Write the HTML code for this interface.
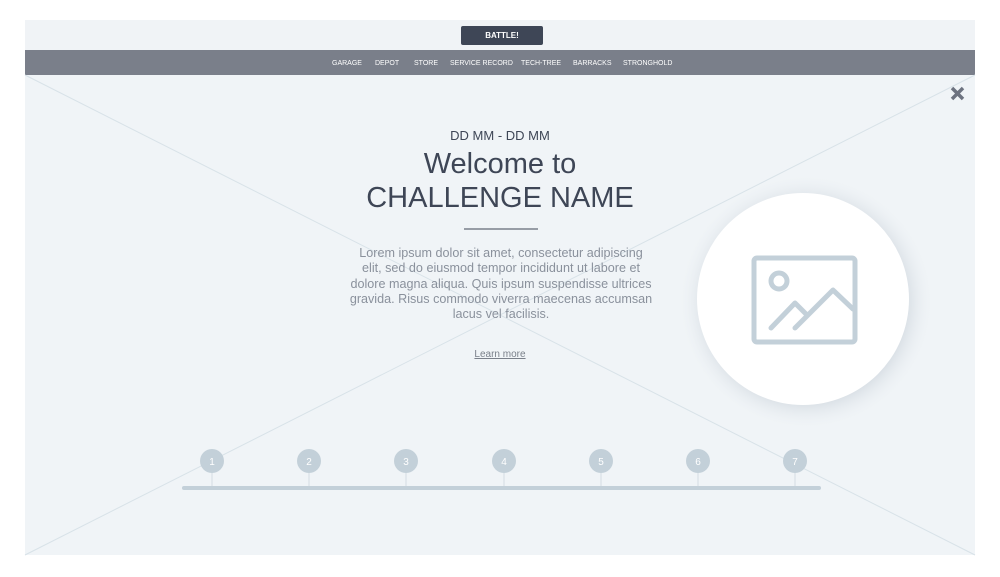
<!DOCTYPE html>
<html><head><style>
*{margin:0;padding:0;box-sizing:border-box}
body{width:1000px;height:577px;background:#fff;position:relative;font-family:"Liberation Sans",sans-serif;overflow:hidden}
.hdr{position:absolute;left:25px;top:20px;width:950px;height:30px;background:#f0f3f6}
.btn{position:absolute;left:461px;top:26px;width:82px;height:19px;background:#3e4656;border-radius:2px;color:#fff;font-size:8px;font-weight:bold;text-align:center;line-height:19px}
.nav{position:absolute;left:25px;top:50px;width:950px;height:25px;background:#7a7f8a;color:#fff;font-size:7px;line-height:27px}
.nav span{position:absolute;top:0;white-space:nowrap}
.main{position:absolute;left:25px;top:75px;width:950px;height:480px;background:#f0f4f7}
.t{position:absolute;left:0;width:1000px;text-align:center;color:#3e4656}
</style></head><body>
<div class="hdr"></div>
<div class="btn">BATTLE!</div>
<div class="nav">
<span style="left:307px">GARAGE</span><span style="left:350px">DEPOT</span><span style="left:389px">STORE</span><span style="left:425px">SERVICE RECORD</span><span style="left:496px">TECH-TREE</span><span style="left:548px">BARRACKS</span><span style="left:598px">STRONGHOLD</span>
</div>
<div class="main"></div>
<svg style="position:absolute;left:0;top:0" width="1000" height="577">
<line x1="25" y1="75" x2="975" y2="555" stroke="#d8e2e8" stroke-width="1"/>
<line x1="975" y1="75" x2="25" y2="555" stroke="#d8e2e8" stroke-width="1"/>
<defs><radialGradient id="g"><stop offset="0.8" stop-color="#c8d0d8" stop-opacity="0.5"/><stop offset="1" stop-color="#f0f4f7" stop-opacity="0"/></radialGradient></defs>
<circle cx="806" cy="302" r="128" fill="url(#g)"/>
<circle cx="803" cy="299" r="106" fill="#fff"/>
<rect x="754" y="258" width="101" height="84" rx="3" fill="none" stroke="#c3d0d9" stroke-width="5"/>
<circle cx="779" cy="281" r="8" fill="none" stroke="#c3d0d9" stroke-width="5"/>
<polyline points="771,328 795,303 807,315" fill="none" stroke="#c3d0d9" stroke-width="5" stroke-linecap="round" stroke-linejoin="round"/>
<polyline points="795,328 833,290 853,309" fill="none" stroke="#c3d0d9" stroke-width="5" stroke-linecap="round" stroke-linejoin="round"/>
<path d="M952 88 L963 99 M963 88 L952 99" stroke="#6d7380" stroke-width="3.5"/>
<rect x="182" y="486" width="639" height="4" rx="2" fill="#c3d0d9"/>
<g fill="#c3d0d9" stroke="#d3dde3">
<line x1="212" y1="461" x2="212" y2="486"/><line x1="309" y1="461" x2="309" y2="486"/><line x1="406" y1="461" x2="406" y2="486"/><line x1="504" y1="461" x2="504" y2="486"/><line x1="601" y1="461" x2="601" y2="486"/><line x1="698" y1="461" x2="698" y2="486"/><line x1="795" y1="461" x2="795" y2="486"/>
</g>
<g fill="#c3d0d9">
<circle cx="212" cy="461" r="12"/><circle cx="309" cy="461" r="12"/><circle cx="406" cy="461" r="12"/><circle cx="504" cy="461" r="12"/><circle cx="601" cy="461" r="12"/><circle cx="698" cy="461" r="12"/><circle cx="795" cy="461" r="12"/>
</g>
<g fill="#fff" font-family="Liberation Sans" font-size="10" text-anchor="middle">
<text x="212" y="465">1</text><text x="309" y="465">2</text><text x="406" y="465">3</text><text x="504" y="465">4</text><text x="601" y="465">5</text><text x="698" y="465">6</text><text x="795" y="465">7</text>
</g>
<line x1="464" y1="229" x2="538" y2="229" stroke="#3e4656" stroke-width="1"/>
</svg>
<div class="t" style="top:128px;font-size:13px">DD MM - DD MM</div>
<div class="t" style="top:147px;font-size:29px;line-height:34px">Welcome to<br>CHALLENGE NAME</div>
<div class="t" style="top:246px;left:349px;width:304px;font-size:12.6px;line-height:15.3px;color:#8a919c">Lorem ipsum dolor sit amet, consectetur adipiscing elit, sed do eiusmod tempor incididunt ut labore et dolore magna aliqua. Quis ipsum suspendisse ultrices gravida. Risus commodo viverra maecenas accumsan lacus vel facilisis.</div>
<div class="t" style="top:349px;font-size:10px;color:#7a808a;text-decoration:underline">Learn more</div>
</body></html>
